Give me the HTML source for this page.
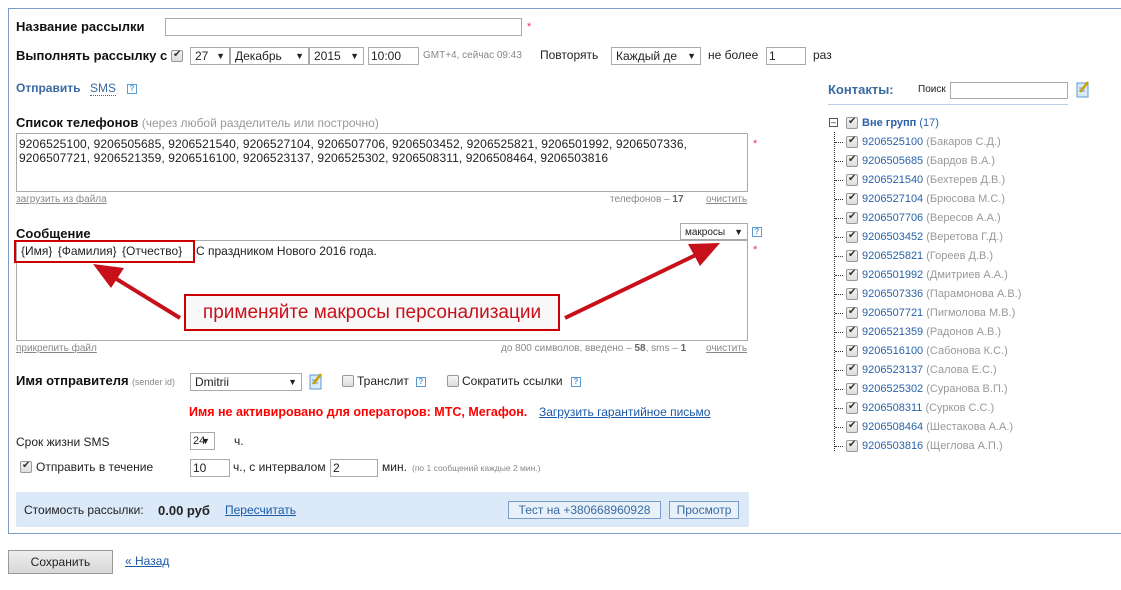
<!DOCTYPE html>
<html><head><meta charset="utf-8">
<style>
*{box-sizing:border-box;margin:0;padding:0}
body{width:1121px;height:590px;background:#fff;font-family:"Liberation Sans","DejaVu Sans",sans-serif;font-size:12px;color:#222;position:relative;overflow:hidden}
.a{position:absolute;white-space:nowrap}
.b{font-weight:bold;font-size:13px;color:#111}
.inp{position:absolute;border:1px solid #aaa;background:#fff;height:18px;font-size:12px;padding:1px 2px;line-height:15px}
.sel{position:absolute;border:1px solid #aaa;background:#fff;height:18px;font-size:12px;padding:1px 4px;line-height:15px}
.sel:after{content:"▼";position:absolute;right:4px;top:1px;font-size:9px}
.star{position:absolute;color:#e35;font-size:11px}
.sm{font-size:10px;color:#888}
.ul{text-decoration:underline}
.help{position:absolute;width:10px;height:10px;border:1px solid #5b9bd5;color:#5b9bd5;font-size:8px;line-height:8px;text-align:center;font-weight:bold}
.cb{position:absolute;width:12px;height:12px;border:1px solid #999;border-radius:2px;background:linear-gradient(#f4f4f4,#ddd)}
.cb.k:after{content:"✔";position:absolute;left:1px;top:-2px;font-size:10px;color:#333}
.ta{position:absolute;border:1px solid #aaa;background:#fff}
.link{color:#1a5aa8;text-decoration:underline}
.tree .a{font-size:11px}
.num{color:#2a62a8}.nm{color:#999}
</style></head><body>
<div class="a" style="left:8px;top:8px;width:1113px;height:526px;border:1px solid #7b9cc6;border-right:none"></div>

<div class="a b" style="left:16px;top:19px">Название рассылки</div>
<div class="inp" style="left:165px;top:18px;width:357px"></div>
<div class="star" style="left:527px;top:21px">*</div>

<div class="a b" style="left:16px;top:48px">Выполнять рассылку с</div>
<div class="cb k" style="left:171px;top:50px"></div>
<div class="sel" style="left:190px;top:47px;width:40px">27</div>
<div class="sel" style="left:230px;top:47px;width:79px">Декабрь</div>
<div class="sel" style="left:309px;top:47px;width:55px">2015</div>
<div class="inp" style="left:368px;top:47px;width:51px">10:00</div>
<div class="a sm" style="left:423px;top:50px">GMT+4, сейчас 09:43</div>
<div class="a" style="left:540px;top:48px">Повторять</div>
<div class="sel" style="left:611px;top:47px;width:90px">Каждый де</div>
<div class="a" style="left:708px;top:48px">не более</div>
<div class="inp" style="left:766px;top:47px;width:40px">1</div>
<div class="a" style="left:813px;top:48px">раз</div>

<div class="a" style="left:16px;top:81px;font-weight:bold;color:#3a6aa0">Отправить</div>
<div class="a" style="left:90px;top:81px;color:#3a6aa0;border-bottom:1px dotted #3a6aa0">SMS</div>
<div class="help" style="left:127px;top:84px">?</div>

<div class="a" style="left:16px;top:115px"><span class="b">Список телефонов</span> <span style="color:#999">(через любой разделитель или построчно)</span></div>
<div class="ta" style="left:16px;top:133px;width:732px;height:59px;padding:3px 2px;line-height:14px;letter-spacing:0.1px">9206525100, 9206505685, 9206521540, 9206527104, 9206507706, 9206503452, 9206525821, 9206501992, 9206507336,<br>9206507721, 9206521359, 9206516100, 9206523137, 9206525302, 9206508311, 9206508464, 9206503816</div>
<div class="star" style="left:753px;top:138px">*</div>
<div class="a sm ul" style="left:16px;top:194px">загрузить из файла</div>
<div class="a sm" style="left:610px;top:194px">телефонов – <b style="color:#666">17</b></div>
<div class="a sm ul" style="left:706px;top:194px">очистить</div>

<div class="a b" style="left:16px;top:226px">Сообщение</div>
<div class="sel" style="left:680px;top:223px;width:68px;height:17px;font-size:10px">макросы</div>
<div class="help" style="left:752px;top:227px">?</div>
<div class="ta" style="left:16px;top:240px;width:732px;height:101px"></div>
<div class="star" style="left:753px;top:244px">*</div>
<div class="a" style="left:21px;top:244px;word-spacing:2px">{Имя} {Фамилия} {Отчество}</div>
<div class="a" style="left:196px;top:244px">С праздником Нового 2016 года.</div>
<div class="a" style="left:14px;top:240px;width:181px;height:23px;border:2px solid #c00"></div>
<svg class="a" style="left:0;top:0" width="1121" height="590">
<g fill="#c8101a">
<line x1="180" y1="318" x2="110" y2="275" stroke="#c8101a" stroke-width="4"/>
<polygon points="93,264 124,268 111,288"/>
<line x1="565" y1="318" x2="700" y2="253" stroke="#c8101a" stroke-width="4"/>
<polygon points="720,243 688,244 700,266"/>
</g></svg>
<div class="a" style="left:184px;top:294px;width:376px;height:37px;border:2px solid #c00;background:#f8f8f8;color:#c8101a;font-size:19px;line-height:33px;text-align:center">применяйте макросы персонализации</div>
<div class="a sm ul" style="left:16px;top:343px">прикрепить файл</div>
<div class="a sm" style="left:501px;top:343px">до 800 символов, введено – <b style="color:#666">58</b>, sms – <b style="color:#666">1</b></div>
<div class="a sm ul" style="left:706px;top:343px">очистить</div>

<div class="a" style="left:16px;top:373px"><span class="b">Имя отправителя</span> <span class="sm" style="font-size:9px">(sender id)</span></div>
<div class="sel" style="left:190px;top:373px;width:112px">Dmitrii</div>
<svg class="a" style="left:309px;top:373px" width="14" height="17"><rect x="1" y="2" width="11" height="14" fill="#dbeaf7" stroke="#5b9bd5"/><line x1="3" y1="7" x2="9" y2="7" stroke="#5b9bd5"/><line x1="3" y1="10" x2="9" y2="10" stroke="#5b9bd5"/><line x1="4" y1="11" x2="12" y2="1" stroke="#c9a000" stroke-width="2.5"/></svg>
<div class="cb" style="left:342px;top:375px"></div>
<div class="a" style="left:357px;top:374px">Транслит</div>
<div class="help" style="left:416px;top:377px">?</div>
<div class="cb" style="left:447px;top:375px"></div>
<div class="a" style="left:462px;top:374px">Сократить ссылки</div>
<div class="help" style="left:571px;top:377px">?</div>

<div class="a" style="left:189px;top:405px;color:#f00;font-weight:bold;font-size:12.5px">Имя не активировано для операторов: МТС, Мегафон.</div>
<div class="a link" style="left:539px;top:405px">Загрузить гарантийное письмо</div>

<div class="a" style="left:16px;top:435px">Срок жизни SMS</div>
<div class="sel" style="left:190px;top:432px;width:25px;padding-left:2px;font-size:11px">24</div>
<div class="a" style="left:234px;top:434px">ч.</div>
<div class="cb k" style="left:20px;top:461px"></div>
<div class="a" style="left:36px;top:460px">Отправить в течение</div>
<div class="inp" style="left:190px;top:459px;width:40px">10</div>
<div class="a" style="left:233px;top:460px">ч., с интервалом</div>
<div class="inp" style="left:330px;top:459px;width:48px">2</div>
<div class="a" style="left:382px;top:460px">мин.</div>
<div class="a sm" style="left:412px;top:463px;font-size:8.5px">(по 1 сообщений каждые 2 мин.)</div>

<div class="a" style="left:16px;top:492px;width:733px;height:35px;background:#dce9f9;border-radius:2px"></div>
<div class="a" style="left:24px;top:503px">Стоимость рассылки:</div>
<div class="a" style="left:158px;top:503px;font-weight:bold;font-size:13px">0.00 руб</div>
<div class="a link" style="left:225px;top:503px">Пересчитать</div>
<div class="a" style="left:508px;top:501px;width:153px;height:18px;border:1px solid #7b9cc6;background:#e8f0fa;color:#3a6aa0;text-align:center;line-height:16px">Тест на +380668960928</div>
<div class="a" style="left:669px;top:501px;width:70px;height:18px;border:1px solid #7b9cc6;background:#e8f0fa;color:#3a6aa0;text-align:center;line-height:16px">Просмотр</div>

<div class="a" style="left:8px;top:550px;width:105px;height:24px;border:1px solid #999;background:linear-gradient(#eee,#d8d8d8);text-align:center;line-height:22px">Сохранить</div>
<div class="a link" style="left:125px;top:554px">« Назад</div>

<div class="a" style="left:828px;top:82px;font-weight:bold;color:#3a6aa0;font-size:13px">Контакты:</div>
<div class="a" style="left:918px;top:84px;font-size:10px">Поиск</div>
<div class="inp" style="left:950px;top:82px;width:118px;height:17px"></div>
<svg class="a" style="left:1076px;top:81px" width="14" height="17"><rect x="1" y="2" width="11" height="14" fill="#dbeaf7" stroke="#5b9bd5"/><line x1="3" y1="7" x2="9" y2="7" stroke="#5b9bd5"/><line x1="3" y1="10" x2="9" y2="10" stroke="#5b9bd5"/><line x1="4" y1="11" x2="12" y2="1" stroke="#c9a000" stroke-width="2.5"/></svg>
<div class="a" style="left:828px;top:104px;width:240px;height:1px;background:#b8d0ec"></div>

<div class="tree">
<div class="a" style="left:829px;top:118px;width:9px;height:9px;border:1px solid #555;font-size:9px;line-height:6px;text-align:center">–</div>
<div class="cb k" style="left:846px;top:117px"></div>
<div class="a" style="left:862px;top:117px"><b class="num">Вне групп</b> <span class="num">(17)</span></div>
<div class="a" style="left:834px;top:132px;height:319px;border-left:1px dotted #333"></div>
</div>
<div class="tree" id="t"></div>
<script>
var d=[["9206525100","Бакаров С.Д."],["9206505685","Бардов В.А."],["9206521540","Бехтерев Д.В."],["9206527104","Брюсова М.С."],["9206507706","Вересов А.А."],["9206503452","Веретова Г.Д."],["9206525821","Гореев Д.В."],["9206501992","Дмитриев А.А."],["9206507336","Парамонова А.В."],["9206507721","Пигмолова М.В."],["9206521359","Радонов А.В."],["9206516100","Сабонова К.С."],["9206523137","Салова Е.С."],["9206525302","Суранова В.П."],["9206508311","Сурков С.С."],["9206508464","Шестакова А.А."],["9206503816","Щеглова А.П."]];
var h="";d.forEach(function(r,i){var y=136+i*19;h+='<div class="a" style="left:835px;top:'+(y+6)+'px;width:8px;border-top:1px dotted #333"></div><div class="cb k" style="left:846px;top:'+y+'px"></div><div class="a" style="left:862px;top:'+y+'px"><span class="num">'+r[0]+'</span> <span class="nm">('+r[1]+')</span></div>';});
document.getElementById("t").innerHTML=h;
</script>
</body></html>
